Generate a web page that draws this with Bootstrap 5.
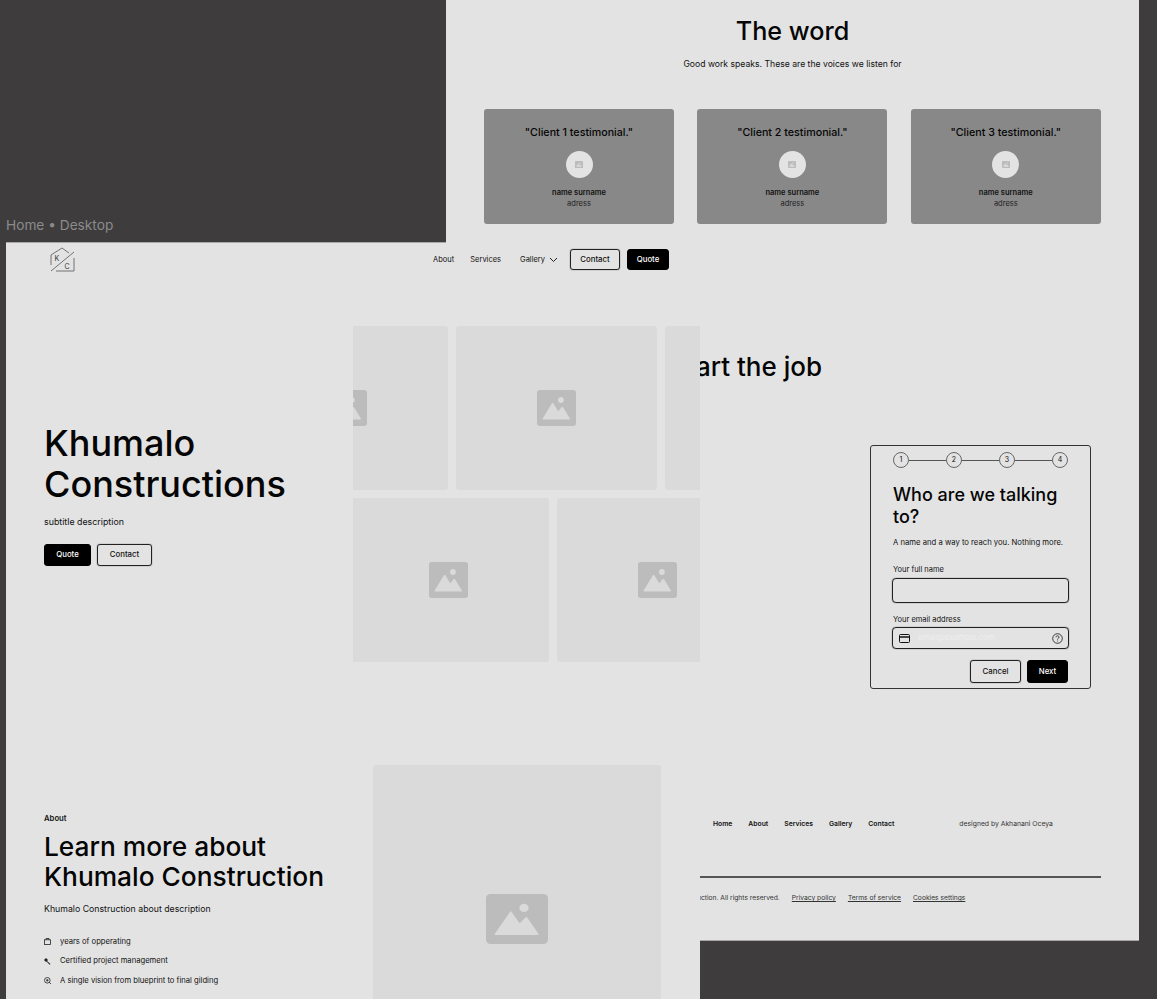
<!DOCTYPE html>
<html lang="en">

<head>
  <meta charset="UTF-8">
  <meta name="viewport" content="width=device-width, initial-scale=1.0">
  <title>Khumalo Constructions</title>
  <link href="https://cdn.jsdelivr.net/npm/bootstrap@5.3.0/dist/css/bootstrap.min.css" rel="stylesheet">
  <style>
    html, body { height: 100%; }
    body { background: #3e3c3d; font-family: "Inter", "Liberation Sans", sans-serif; color: #111; overflow: hidden; }
    .stage { position: relative; width: 1157px; height: 999px; overflow: hidden; }
    .frame-right, .frame-left { position: absolute; background: #e3e3e3; overflow: hidden; }
    .frame-right { left: 446px; top: 0; width: 693px; height: 941px; padding: 0 38px; border-bottom: 1px solid #a8a8a8; }
    .frame-left { left: 6px; top: 242px; width: 694px; height: 757px; }
    .frame-left::before { content: ""; position: absolute; left: 0; top: 0; width: 440px; height: 1px; background: #a8a8a8; }
    .crumb { position: absolute; left: 6px; top: 216px; color: #8b8b8b; font-size: 13.7px; line-height: 18px; }
    .head-font { font-family: "Inter", "Liberation Sans", sans-serif; font-weight: 500; color: #050505; }

    .word-title { font-size: 25.2px; line-height: 32px; padding-top: 15px; margin: 0; }
    .word-sub { font-size: 8.65px; line-height: 12px; margin: 11px 0 39px; }
    .quote-row { gap: 23.4px; }
    .quote-card { width: 190px; height: 115px; background: #888; border-radius: 3px; padding-top: 16px; font-size: 7.5px; }
    .quote-text { font-size: 10.7px; line-height: 16px; margin-bottom: 10px; }
    .avatar { width: 27px; height: 27px; background: #e3e3e3; border-radius: 50%; margin-bottom: 9px; }
    .quote-name { font-weight: 600; line-height: 11px; }
    .quote-place { line-height: 11px; color: #222; }

    .job-title { font-size: 26px; line-height: 32px; margin: 127px 0 0; text-align: right; padding-right: 279px; white-space: nowrap; }
    .form-box { width: 221px; height: 244px; margin: 62px 0 0 386px; border: 1px solid #333; border-radius: 3px; padding: 6px 22px 0; }
    .step-dot { width: 16px; height: 16px; border: 1px solid #666; border-radius: 50%; font-size: 7px; flex: none; }
    .step-line { height: 1px; background: #555; flex: 1; }
    .form-title { font-size: 18px; line-height: 22px; margin: 16px 0 9px; }
    .form-note { font-size: 7.7px; line-height: 12px; margin: 0 0 15px; white-space: nowrap; }
    .form-label-sm { font-size: 7.5px; line-height: 12px; margin-bottom: 2px; }
    .label-tight { margin-bottom: 1px; }
    .form-field { border: 1px solid #222; border-radius: 4px; background: transparent; margin-left: -1px; margin-right: -1px; box-shadow: 0 0 1px #222; }
    .field-name { height: 25px; margin-bottom: 11px; }
    .field-mail { height: 22px; padding: 0 5px 0 6px; color: #eee; font-size: 7.8px; margin-bottom: 11px; }
    .form-actions { gap: 6px; }
    .btn-line, .btn-solid { font-size: 7.8px; font-weight: 500; border-radius: 3px; display: flex; align-items: center; justify-content: center; padding: 0; }
    .btn-line { border: 1px solid #222; background: transparent; color: #111; box-shadow: 0 0 1px #222; }
    .btn-solid { border: 1px solid #000; background: #000; color: #fff; }

    .foot-links { margin-top: 130px; padding-left: 229px; font-size: 6.8px; line-height: 10px; font-weight: 600; color: #111; gap: 16px; white-space: nowrap; }
    .foot-credit { margin-left: 49px; font-weight: 400; color: #333; }
    .foot-rule { height: 2px; background: #555; margin: 47px 0 0 216px; }
    .foot-legal { margin-top: 15px; padding-left: 136px; font-size: 6.7px; line-height: 10px; color: #333; gap: 12px; white-space: nowrap; }
    .foot-legal a { color: #333; }

    .top-nav { height: 36px; padding: 7px 31px 0 44px; font-size: 7.5px; }
    .nav-logo { margin-top: -2px; }
    .nav-gap { gap: 16px; }
    .nav-gallery { margin-left: 3px; }
    .nav-actions { gap: 7px; margin-left: -4px; }
    .nav-btn { height: 21px; }
    .hero-row { height: 335px; margin-top: 48px; }
    .hero-copy { width: 347px; padding: 2px 0 0 38px; }
    .hero-title { font-size: 36px; line-height: 41px; margin: 0 0 11px; }
    .hero-sub { font-size: 8.85px; line-height: 12px; margin: 0 0 16px; }
    .hero-actions { gap: 6px; }
    .hero-gallery { width: 347px; overflow: hidden; gap: 8px; }
    .shot-row { display: flex; gap: 8px; height: 164px; flex: none; }
    .shot-row-a { margin-left: -106px; }
    .shot-row-b { margin-left: -5px; }
    .shot { background: #dadada; border-radius: 3px; width: 201px; flex: none; }
    .shot svg { width: 39px; height: 36px; }

    .about-row { margin-top: 104px; padding-left: 38px; }
    .about-copy { width: 329px; padding-top: 48px; }
    .about-label { font-size: 7.7px; font-weight: 600; line-height: 12px; margin: 0 0 7px; }
    .about-title { font-size: 26.3px; line-height: 30px; margin: 0 0 11px; white-space: nowrap; }
    .about-text { font-size: 8.75px; line-height: 12px; margin: 0 0 20.5px; }
    .about-list { font-size: 7.65px; line-height: 12px; gap: 7.5px; }
    .about-item { gap: 9px; }
    .about-shot { width: 288px; height: 308px; background: #dadada; border-radius: 3px; }
    .about-shot svg { width: 62px; height: 50px; }
  </style>
</head>

<body>
  <svg width="0" height="0" class="d-block">
    <symbol id="pic" viewBox="0 0 40 36" preserveAspectRatio="none">
      <rect width="40" height="36" rx="3" fill="#bcbcbc"/>
      <circle cx="24.500" cy="10" r="3" fill="#dadada"/>
      <path d="M6 29 16 13l5.700 9 4.300-5 7.500 12Z" fill="#dadada" stroke="#dadada" stroke-linejoin="round"/>
    </symbol>
  </svg>

  <div class="stage">
    <div class="crumb">Home • Desktop</div>

    <!-- right frame -->
    <section class="frame-right">
      <h2 class="word-title head-font text-center">The word</h2>
      <p class="word-sub text-center">Good work speaks. These are the voices we listen for</p>

      <div class="d-flex quote-row" id="quotes"></div>

      <h2 class="job-title head-font">Let's start the job</h2>

      <div class="form-box">
        <div class="d-flex align-items-center">
          <span class="step-dot d-flex align-items-center justify-content-center">1</span><span class="step-line"></span>
          <span class="step-dot d-flex align-items-center justify-content-center">2</span><span class="step-line"></span>
          <span class="step-dot d-flex align-items-center justify-content-center">3</span><span class="step-line"></span>
          <span class="step-dot d-flex align-items-center justify-content-center">4</span>
        </div>
        <h3 class="form-title head-font">Who are we talking to?</h3>
        <p class="form-note">A name and a way to reach you. Nothing more.</p>
        <div class="form-label-sm">Your full name</div>
        <div class="form-field field-name"></div>
        <div class="form-label-sm label-tight">Your email address</div>
        <div class="form-field field-mail d-flex align-items-center gap-2">
          <svg width="11" height="9" viewBox="0 0 11 9" fill="none" stroke="#111"><rect x=".5" y=".5" width="10" height="8" rx="1"/><path d="M.5 3h10" stroke-width="1.500"/></svg>
          <span class="flex-grow-1">email@example.com</span>
          <svg width="11" height="11" viewBox="0 0 11 11" fill="none" stroke="#111" stroke-width=".8"><circle cx="5.500" cy="5.500" r="4.800"/><path d="M4 4.300c0-2 3-2 3 0 0 1-1.500 1-1.500 2.200M5.500 7.600v.8"/></svg>
        </div>
        <div class="d-flex justify-content-end form-actions">
          <button class="btn-line" style="width:51px;height:23px">Cancel</button>
          <button class="btn-solid" style="width:41px;height:23px">Next</button>
        </div>
      </div>

      <div class="foot-links d-flex">
        <span>Home</span><span>About</span><span>Services</span><span>Gallery</span><span>Contact</span>
        <span class="foot-credit">designed by Akhanani Oceya</span>
      </div>
      <div class="foot-rule"></div>
      <div class="foot-legal d-flex">
        <span>© 2025 Khumalo Construction. All rights reserved.</span>
        <a href="#">Privacy policy</a><a href="#">Terms of service</a><a href="#">Cookies settings</a>
      </div>
    </section>

    <!-- left frame -->
    <section class="frame-left">
      <nav class="top-nav d-flex justify-content-between align-items-start">
        <svg class="nav-logo" width="26" height="26" viewBox="0 0 26 26" fill="none" stroke="#555" stroke-width=".8">
          <path d="M1 18V8L12 1l7 5M1 24 24 5M6 24H24V11"/>
          <text x="4.500" y="14" font-size="7" fill="#333" stroke="none" font-family="Inter">K</text>
          <text x="14.500" y="22" font-size="7" fill="#333" stroke="none" font-family="Inter">C</text>
        </svg>
        <div class="d-flex align-items-center nav-gap">
          <span>About</span><span>Services</span>
          <span class="nav-gallery d-flex align-items-center gap-1">Gallery
            <svg width="9" height="6" viewBox="0 0 9 6" fill="none" stroke="#222"><path d="m1 1 3.500 3.500L8 1"/></svg>
          </span>
          <div class="d-flex nav-actions">
            <button class="btn-line nav-btn" style="width:50px">Contact</button>
            <button class="btn-solid nav-btn" style="width:42px">Quote</button>
          </div>
        </div>
      </nav>

      <div class="hero-row d-flex align-items-center">
        <div class="hero-copy">
          <h1 class="hero-title head-font">Khumalo Constructions</h1>
          <p class="hero-sub">subtitle description</p>
          <div class="d-flex hero-actions">
            <button class="btn-solid" style="width:47px;height:22px">Quote</button>
            <button class="btn-line" style="width:55px;height:22px">Contact</button>
          </div>
        </div>
        <div class="hero-gallery d-flex flex-column">
          <div class="shot-row shot-row-a" data-count="3"></div>
          <div class="shot-row shot-row-b" data-count="2"></div>
        </div>
      </div>

      <div class="about-row d-flex">
        <div class="about-copy">
          <p class="about-label">About</p>
          <h2 class="about-title head-font">Learn more about<br>Khumalo Construction</h2>
          <p class="about-text">Khumalo Construction about description</p>
          <div class="about-list d-flex flex-column">
            <div class="d-flex align-items-center about-item">
              <svg width="7" height="7" viewBox="0 0 7 7" fill="none" stroke="#222" stroke-width=".8"><rect x=".5" y="1.800" width="6" height="4.700"/><path d="M2 1.800V.5h3v1.300"/></svg>
              <span>years of opperating</span>
            </div>
            <div class="d-flex align-items-center about-item">
              <svg width="7" height="7" viewBox="0 0 7 7" fill="#222"><path d="M0 2 2 0l2 2-1 1 3.500 3-.8.800L2.500 3.500 2 4Z"/></svg>
              <span>Certified project management</span>
            </div>
            <div class="d-flex align-items-center about-item">
              <svg width="7" height="7" viewBox="0 0 7 7" fill="none" stroke="#222" stroke-width=".8"><circle cx="3.300" cy="3.300" r="2.800"/><path d="M3.300 2v2.600M2 3.300h2.600M5 5l2 2"/></svg>
              <span>A single vision from blueprint to final gilding</span>
            </div>
          </div>
        </div>
        <div class="about-shot d-flex align-items-center justify-content-center">
          <svg><use href="#pic"/></svg>
        </div>
      </div>
    </section>
  </div>

  <script src="https://cdn.jsdelivr.net/npm/bootstrap@5.3.0/dist/js/bootstrap.bundle.min.js"></script>
  <script>
    const quotes = document.getElementById('quotes');
    [1, 2, 3].forEach(n => {
      quotes.innerHTML += `
        <div class="quote-card d-flex flex-column align-items-center text-center">
          <div class="quote-text head-font">"Client ${n} testimonial."</div>
          <div class="avatar d-flex align-items-center justify-content-center">
            <svg width="8" height="7"><use href="#pic"/></svg>
          </div>
          <div class="quote-name">name surname</div>
          <div class="quote-place">adress</div>
        </div>`;
    });

    document.querySelectorAll('.shot-row').forEach(row => {
      for (let i = 0; i < Number(row.dataset.count); i++) {
        row.innerHTML += `<div class="shot d-flex align-items-center justify-content-center"><svg><use href="#pic"/></svg></div>`;
      }
    });
  </script>
</body>

</html>
